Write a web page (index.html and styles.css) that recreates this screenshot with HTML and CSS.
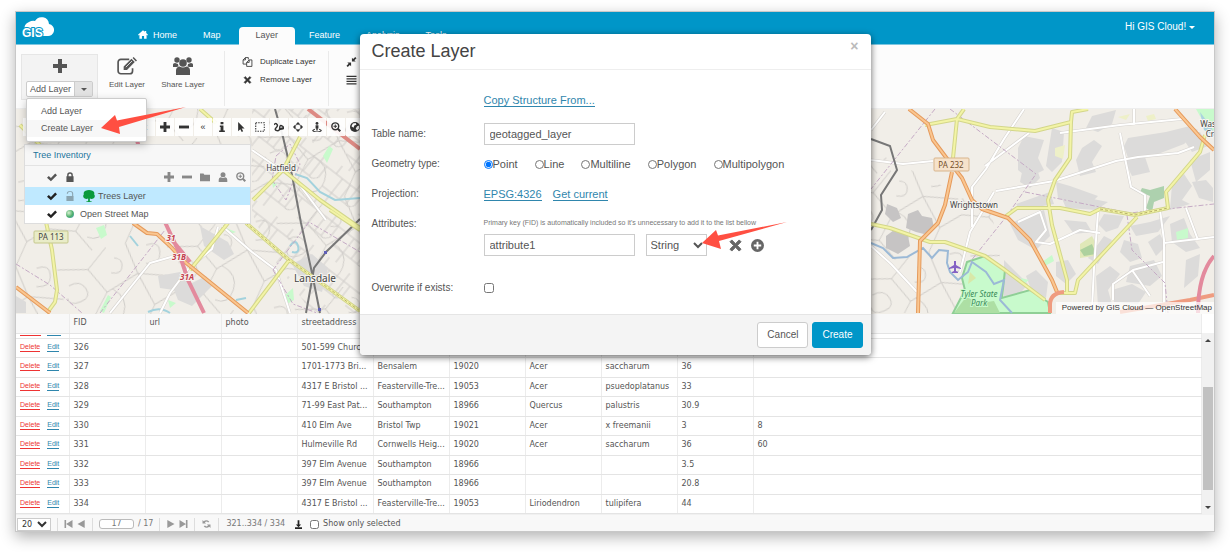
FILE: index.html
```html
<!DOCTYPE html>
<html lang="en">
<head>
    <meta charset="UTF-8">
    <meta name="viewport" content="width=device-width, initial-scale=1.0">
    <title>GIS Cloud Map Editor</title>
    <link rel="stylesheet" href="styles.css">
</head>
<body>
    <!-- shared icons -->
    <svg class="sprite" width="0" height="0" aria-hidden="true">
        <symbol id="i-plus" viewBox="0 0 14 14"><path d="M5 0h4v5h5v4H9v5H5V9H0V5h5z"/></symbol>
        <symbol id="i-minus" viewBox="0 0 14 14"><path d="M0 5h14v4H0z"/></symbol>
        <symbol id="i-times" viewBox="0 0 14 14"><path d="M3 1l4 4 4-4 2 2-4 4 4 4-2 2-4-4-4 4-2-2 4-4-4-4z" stroke="currentColor"/></symbol>
        <symbol id="i-check" viewBox="0 0 14 14"><path d="M0 8l2.500-2.500 3 3L11.500 2 14 4.500 5.500 13z"/></symbol>
        <symbol id="i-lock" viewBox="0 0 14 14"><path d="M2 6h1V4.500a4 4 0 0 1 8 0V6h1v8H2zM5 6h4V4.500a2 2 0 0 0-4 0z" fill-rule="evenodd"/></symbol>
        <symbol id="i-unlock" viewBox="0 0 14 14"><path d="M2 7h8V4a3 3 0 0 0-6 0h-1.500a4.500 4 0 0 1 9 0v3h.5v7H2z" fill-rule="evenodd"/></symbol>
        <symbol id="i-folder" viewBox="0 0 14 14"><path d="M0 2h5l1 2h8v9H0z"/></symbol>
        <symbol id="i-user" viewBox="0 0 14 14"><circle cx="7" cy="4" r="3.500"/><path d="M1 14v-3q0-3 3-3.500 3 2 6 0 3 .5 3 3.500v3z"/></symbol>
        <symbol id="i-zoom" viewBox="0 0 14 14"><circle cx="6" cy="6" r="4.800" fill="none" stroke="currentColor" stroke-width="2"/><path d="M5.300 3.500h1.400v1.800h1.800v1.400H6.700v1.800H5.300V6.700H3.500V5.300h1.800zM8.500 10.500l2-2 3.500 3.500-2 2z"/></symbol>
    </svg>

    <div class="app">
        <header class="topbar">
            <svg class="logo" viewBox="0 0 32 26">
                <path d="M3 15a6 6 0 0 1 4-8 8.500 8.500 0 0 1 6-1A7.500 7.500 0 0 1 27 9a5.500 5.500 0 0 1-2 12H4z" fill="#fff"/>
                <text x="0" y="22" font-size="12">GIS</text>
            </svg>
            <nav class="tabs">
                <a href="#"><svg class="home" viewBox="0 0 14 12"><path d="M7 0l2.500 2.300V1h2v3L14 6.500l-1 1-1-1V12H8.500V8h-3v4H2V6.500l-1 1-1-1z"/></svg>Home</a>
                <a href="#">Map</a>
                <a href="#" class="active">Layer</a>
                <a href="#">Feature</a>
                <a href="#">Analysis</a>
                <a href="#">Tools</a>
            </nav>
            <a href="#" class="account">Hi GIS Cloud! <span class="caret"></span></a>
        </header>

        <section class="ribbon">
            <div class="add-box">
                <svg class="big-plus"><use href="#i-plus"/></svg>
                <div class="split">
                    <button type="button">Add Layer</button>
                    <button type="button" class="split-caret" aria-label="More"><span class="caret"></span></button>
                </div>
                <ul class="menu">
                    <li><a href="#">Add Layer</a></li>
                    <li class="hover"><a href="#">Create Layer</a></li>
                </ul>
            </div>
            <button type="button" class="tool edit">
                <svg viewBox="0 0 18 16"><path d="M11 2H3.500A2.500 2.500 0 0 0 1 4.500v8A2.500 2.500 0 0 0 3.500 15h8a2.500 2.500 0 0 0 2.500-2.500V10" fill="none" stroke="currentColor" stroke-width="1.500"/><path d="M6 8.500L13 1.500l3 3-7 7H6zM14 .8l1-.8 3 3-1 1z"/><path d="M8 9l5.500-5.500" stroke="#fff" stroke-width=".7"/></svg>
                Edit Layer
            </button>
            <button type="button" class="tool">
                <svg viewBox="0 0 20 18"><circle cx="10" cy="6" r="3.800"/><circle cx="4" cy="3" r="2.700"/><circle cx="16" cy="3" r="2.700"/><path d="M0 10V7.500Q0 6 2 6l3 1 .5 2.500-2 .5zM20 10V7.500Q20 6 18 6l-3 1-.5 2.500 2 .5zM3 18v-4.500Q3 10 6.500 9.500q3.500 2 7 0Q17 10 17 13.500V18z"/></svg>
                Share Layer
            </button>
            <div class="actions">
                <button type="button"><svg viewBox="0 0 12 12"><path d="M7 3V.700H3.500L.7 3.500V8.500H5M3.500.7v2.800H.7M8 3.500h3.300v7.800H5V6.500zM8 3.500v3H5" fill="none" stroke="currentColor"/></svg>Duplicate Layer</button>
                <button type="button"><svg class="small"><use href="#i-times"/></svg>Remove Layer</button>
            </div>
            <div class="actions more">
                <button type="button" aria-label="Zoom to layer"><svg viewBox="0 0 12 12"><path d="M6.500 1L8 2.500 10.500 0 12 1.500 9.500 4 11 5.500H6.500zM5.500 11L4 9.500 1.500 12 0 10.500 2.500 8 1 6.500h4.500z"/></svg></button>
                <button type="button" aria-label="Attributes"><svg viewBox="0 0 12 12"><path d="M0 1h12v1.500H0zM0 4h12v1.500H0zM0 7h12v1.500H0zM0 10h12v1.500H0z"/></svg></button>
            </div>
        </section>

        <section class="map">
            <svg class="tiles" viewBox="16 109 1198 205" preserveAspectRatio="xMinYMin slice">
                <defs>
                    <pattern id="streets" width="112" height="88" patternUnits="userSpaceOnUse" patternTransform="rotate(-12)">
                        <path d="M0 12l30 6 22-18M30 18l14 26 34-12 34 10M44 44l-18 22-26-8M26 66l12 22M78 32l-6-32M78 32l10 34-16 22M88 66l24-8M50 42q14 12 6 26t-20 6M92 6q14-2 12 10t-16 8M8 30q12-4 16 6t-8 12-12-6M58 12q8 2 6 10t-12 4" fill="none" stroke="#cfccc8"/>
                    </pattern>
                    <pattern id="blocks" width="46" height="40" patternUnits="userSpaceOnUse" patternTransform="rotate(38)">
                        <path d="M0 10h46M0 28h30M12 10v30M30 0v28M22 10v18M38 10v14q-4 6-8 4M4 0v10" fill="none" stroke="#d0cdca"/>
                    </pattern>
                </defs>
                <rect x="16" y="109" width="1198" height="205" fill="#f1eee8"/>
                <rect x="16" y="109" width="344" height="205" fill="url(#streets)"/>
                <path d="M252 109h108v204h-48l-40-56-20-44z" fill="url(#blocks)"/>
                <path d="M871 150l120 60 20 103H871z" fill="url(#streets)"/>

                <!-- built-up areas -->
                <g fill="#dcdbda">
                    <path d="M158 276l22-4 10 12 16-8 6 10-20 20-14-6-4-10-14-2zM200 226l28 16 6 12-10 6-20-14zM292 264l20-10 16 14-6 24-18-6zM16 296l10 6v11H16z"/>
                    <path d="M1018 148l6-12 20 4-6 18 6 12-16 8-10-8zM1022 172l14-6 4 12-10 10-10-6zM1052 128l12 4-2 30-10 10-6-6zM1092 116l24-6-4 14-14 8-12-4zM1056 182l14 4 28 10-10 10-30-8zM1128 138l38-6 24-6 8 4-14 14-26 10-30 4-4-12zM1124 160l20-6 6 18-18 4zM1082 148l12-8 8 6-10 16 4 10-16 4-4-16z"/>
                    <path d="M1016 204l34-12 4 12-34 6zM1022 218l22-8 6 26-14 14-18-10-8-16zM1060 194l28 4 20 4-12 8-30-2zM1172 184l12-10 8 12-10 14 8 4-20 6zM1190 160l20-8v18l-14 12zM1192 182l14-2 7 8v14l-14-4z"/>
                    <path d="M1064 220l22 2 6 10-18 2zM1104 214l20 2-6 12-12 4-8-8zM1130 226l20-4 20-6-12 16-22 4zM1124 240l14 4 4 14-12 4-10-10zM1148 242l12-8 6 12-10 10zM1056 262l12-2 8 14-10 10-10-8zM1026 276l10-6 12 12-2 16-14-6zM1004 260l24 24-10 12-14 4zM1096 276l14-10 10 8-12 16 4 14-14 2zM1130 266l24-6 8 16-12 10-24-4zM1170 224l14-6 6 16 10 14-14 4-14-10zM1186 260l14-6-2 22-14 12zM1112 290l20-6 14 8-8 12-24-2zM1180 134l20-2 8 14-16 6zM1104 236l8 4-14 24-10-6z"/>
                </g>
                <g fill="#c6c4c4"><path d="M887 204l10 4 4 10-8 4-8-8zM908 214l10-4 4 6 10 2 2 10-10 6-8-2-10-4zM886 236l8-6 14 6 2 10-12 8-12-6z"/></g>

                <!-- parks and woods -->
                <path d="M967 262l18-6 20 14-3 28 28-8 18 12 2 11H953l12-23-3-12z" fill="#c8facc" stroke="#8fcf96" stroke-width="2"/>
                <path d="M954 313l12-16 14 6 14-2 6 12z" fill="#addfa4"/>
                <path d="M970 272l6 6-8 6z" fill="#d8e8a8"/>
                <g fill="#c8facc"><path d="M96 228l8-3 3 10-6 4zM284 296l9-8 1 12-7 4zM168 300l8 3-6 5zM100 311l8-16 3 2-7 16zM323 156l6-10 4 3-6 14zM226 228l10 4-6 2zM272 182l5 2-4 4zM1042 262l10-7 2 6-9 5zM1021 278l8 2-6 5zM1176 232l12-4v10l-11 2zM1196 109h18v22q-10-6-18-22z"/></g>
                <path d="M1142 188l8 2 14-4v12l-10 4-2 10-6-4 4-12-10-4z" fill="#add1ae"/>
                <path d="M1080 244l12-8 4 8-2 12-14 2z" fill="#e0e8b8"/>
                <path d="M1080 250l12-6 4 10-12 2z" fill="#add19e"/>
                <path d="M1055 148l10-3-2 14-8-3zM1118 117l12-3-4 6zM1146 116l8-2 2 5-8 2z" fill="#eef0c8"/>

                <!-- water -->
                <g fill="none" stroke="#a3d2dd" stroke-width="2">
                    <path d="M295 174l12 4 13 14 15 8 25-2M290 246q6-8 8 0t-6 6M130 236l8 10M148 312q12-6 22 1M236 300l10-2"/>
                    <path d="M871 243l12 5 10 10 14-1 16-9 9 10 7-8 9 1-1 12 3 9 8 8 10-8 4-10 14 10 8 12 10-4-4 20 12 13" stroke="#9bb9d6"/>
                </g>
                <path d="M1200 112l12 16 2 8-10-6z" fill="#aad3df"/>

                <!-- white local roads -->
                <g fill="none" stroke="#d5d2ce" stroke-width="3">
                    <path id="w1" d="M871 130l14-18M871 160l32 4 30-3M1024 109l-20 30-18 30-14 18v40M1029 133l-44 33M994 192l-24 40-10 40M996 191l58-10 62-20 22-4 40-4 16-6M1060 133l60-8 62-6M1120 133l6 30 5 24 14 8v20M1134 109v16M1098 212l-4 56-2 40M1018 222l22-10 6 18-10 12 14 2 30-14 20 3M1160 210l4 30v73M1113 300v-16l20-14 30-8M1186 208l12 32M1164 243l50-6M1150 296l-18-26M222 226l30 26 24 18 14 43M160 313l10-20 18-24 24-20 6-22M110 313l40-50 28-8M252 150l44 30 30 40M871 246l20 18 26 28"/>
                </g>
                <use href="#w1" class="road-top"/>

                <!-- boundaries -->
                <g fill="none" stroke="#c5aac5" stroke-width="1" stroke-dasharray="5 2 2 2">
                    <path d="M935 109l-64 80M950 109l86 65-30 43-36 45M1025 192l105 21 84-9M1127 215l5 35 33 33 3 30M16 264l34 21 32 28M100 313l65-83M273 270l36-48 51 30M273 270l20 34 24 9M276 156l14-12 10 20-14 36-14-20zM34 109l30 26"/>
                </g>

                <!-- railways -->
                <g fill="none" stroke="#777" stroke-width="2">
                    <path d="M275 109l8 28 9 38 9 48 11 50 8 40M360 219l-34 33-12 16-2 12-6 33"/>
                    <path d="M871 139l19 7 7 24-16 25 1 15-11 20"/>
                </g>
                <g fill="#6060b8"><rect x="352" y="224" width="3" height="3"/><rect x="324" y="251" width="3" height="3"/><rect x="318" y="308" width="3" height="3"/></g>

                <!-- yellow secondary roads -->
                <g fill="none" stroke="#d3d68a" stroke-width="4" stroke-linejoin="round">
                    <path id="y1" d="M46 222l6 28 5 40-2 12-8 11M228 223l-38 47M246 223l42 36 72 52M290 259l-41 54M330 210l30 20M300 137l-17 33-30 30M283 170l37 30 40 28M20 125l20 20M200 109l16 14M964 109l-7 10-32 6M957 119l-4 39M957 119l33 8 45 4 36-9 1-10 16-3M1071 122l-1 36-15 22-7 20 4 25 15 55v12M1006 216l11-8h43l30 6 10-5 35 6 33-7-2-16 34-40 5-17M1137 217l-59 63-3 13h-18M871 224l19 4 40 14h15l40 14 20 14 40 30"/>
                </g>
                <use href="#y1" class="road-top yellow-top"/>
                <path d="M246 223l42 36 72 52M1100 209l35 6 33-7" fill="none" stroke="#b9b26a" stroke-width="1" stroke-dasharray="3 2"/>

                <!-- orange primary roads -->
                <g fill="none" stroke="#e59a5c" stroke-width="4" stroke-linejoin="round">
                    <path id="o1" d="M16 287l34 26M133 223l14 10 10 1 13 12 15 16 63 51M909 109l19 15 5 16 15 20 14 18 10 22 10 9 26 9 22 22 22 40 5 12M952 172l-7 33-7 18-18 18-2 72M1175 109l25 28 14 13"/>
                </g>
                <use href="#o1" class="road-top orange-top"/>
                <path d="M1050 313v-8q0-12 14-13M1120 312l70-12 24-5" fill="none" stroke="#ef9c80" stroke-width="4"/>

                <!-- motorways -->
                <path d="M136 136l10 40 18 44 14 30 10 30 16 33M172 240l10 12 8 10M1214 256q-16 18-16 57" fill="none" stroke="#e38a9d" stroke-width="4"/>
                <path d="M308 109l52 40" fill="none" stroke="#dd8a83" stroke-width="4"/>

                <rect class="shield-y" x="34" y="231" width="34" height="12" rx="1"/>
                <rect class="shield-o" x="934" y="158" width="35" height="13" rx="1"/>
                <path d="M954 261h2v4l5 3v1l-5-1v3l2 1v1h-6v-1l2-1v-3l-5 1v-1l5-3z" fill="#8461c4"/>
                <g class="labels" text-anchor="middle">
                    <text x="51" y="240" class="sm bare">PA 113</text>
                    <text x="951" y="168" class="sm bare brown">PA 232</text>
                    <text x="281" y="171" class="sm">Hatfield</text>
                    <text x="315" y="282">Lansdale</text>
                    <text x="974" y="208" class="sm">Wrightstown</text>
                    <text x="171" y="241" class="exit">31</text>
                    <text x="179" y="260" class="exit">31B</text>
                    <text x="187" y="280" class="exit">31A</text>
                    <text x="979" y="297" class="park">Tyler State</text>
                    <text x="979" y="306" class="park">Park</text>
                    <text x="1208" y="127" class="sm">Was</text>
                    <text x="1210" y="137" class="sm">Cr</text>
                </g>
            </svg>

            <div class="map-tools">
                <span class="map-search">t</span>
                <button type="button" aria-label="Zoom in"><svg><use href="#i-plus"/></svg></button>
                <button type="button" aria-label="Zoom out"><svg><use href="#i-minus"/></svg></button>
                <button type="button">«</button>
                <button type="button" aria-label="Info"><svg viewBox="0 0 14 14"><path d="M5 0h4v3H5zM4 5h5v7h2v2H3v-2h2V7H4z"/></svg></button>
                <button type="button" aria-label="Select"><svg viewBox="0 0 14 14"><path d="M3 0l9 9H8l2 4-2 1-2-4-3 3z"/></svg></button>
                <button type="button" aria-label="Area select"><svg viewBox="0 0 14 14"><path d="M1 1h12v12H1z" fill="none" stroke="currentColor" stroke-width="1.500" stroke-dasharray="2 1.500"/></svg></button>
                <button type="button" aria-label="Measure"><svg viewBox="0 0 14 14"><path d="M0 4q2-3 4-1t-1 5 1 4 4-4 4-2-1 4-3 0 5-2" fill="none" stroke="currentColor" stroke-width="2"/></svg></button>
                <button type="button" aria-label="Center"><svg viewBox="0 0 14 14"><circle cx="7" cy="7" r="4" fill="none" stroke="currentColor"/><path d="M7 0l3 3H4zM7 14l3-3H4zM0 7l3-3v6zM14 7l-3-3v6z"/></svg></button>
                <button type="button" aria-label="Street view"><svg viewBox="0 0 14 14"><circle cx="7" cy="2" r="2"/><path d="M5 4.500h4V9H8v3H6V9H5z"/><path d="M4 10q-3 1-3 2 2 2 6 2t6-2q0-1-3-2" fill="none" stroke="currentColor" stroke-width="1.500"/></svg></button>
                <button type="button" aria-label="Zoom area"><svg><use href="#i-zoom"/></svg></button>
                <button type="button" aria-label="World"><svg viewBox="0 0 14 14"><circle cx="7" cy="7" r="7"/><path d="M4 2l4-.5L9 4 6 5 5 8 2 6zM10 6l3-1v4l-3 3-2-3z" fill="#fff"/></svg></button>
            </div>

            <aside class="layers">
                <h2>Tree Inventory</h2>
                <div class="layer-tools">
                    <svg class="dark"><use href="#i-check"/></svg>
                    <svg class="dark"><use href="#i-lock"/></svg>
                    <span class="spacer"></span>
                    <svg><use href="#i-plus"/></svg>
                    <svg><use href="#i-minus"/></svg>
                    <svg><use href="#i-folder"/></svg>
                    <svg><use href="#i-user"/></svg>
                    <svg><use href="#i-zoom"/></svg>
                </div>
                <div class="layer selected">
                    <svg><use href="#i-check"/></svg>
                    <svg class="faded"><use href="#i-unlock"/></svg>
                    <svg class="tree" viewBox="0 0 14 14"><path d="M3 1q4-2 8 0 3 1 2 4 2 3-1 5-2 1-4 0v3h2v1H4v-1h2v-3q-2 1-4 0-3-2-1-5-1-3 2-4z"/></svg>
                    Trees Layer
                </div>
                <div class="layer">
                    <svg><use href="#i-check"/></svg>
                    <span class="globe"></span>
                    Open Street Map
                </div>
            </aside>

            <div class="attribution">Powered by GIS Cloud — OpenStreetMap</div>
        </section>

        <section class="records">
            <div class="records-main">
                <table>
                    <colgroup>
                        <col class="c-links"><col class="c"><col class="c"><col class="c"><col class="c"><col class="c"><col class="c"><col class="c"><col class="c"><col class="c"><col>
                    </colgroup>
                    <thead>
                        <tr><th></th><th>FID</th><th>url</th><th>photo</th><th>streetaddress</th><th></th><th></th><th></th><th></th><th></th><th></th></tr>
                    </thead>
                    <tbody>
                        <tr class="partial"><td><i class="red"></i><i></i></td><td></td><td></td><td></td><td></td><td></td><td></td><td></td><td></td><td></td><td></td></tr>
                        <tr><td><a href="#" class="del">Delete</a><a href="#">Edit</a></td><td>326</td><td></td><td></td><td>501-599 Church</td><td></td><td></td><td></td><td></td><td></td><td></td></tr>
                        <tr><td><a href="#" class="del">Delete</a><a href="#">Edit</a></td><td>327</td><td></td><td></td><td>1701-1773 Bri...</td><td>Bensalem</td><td>19020</td><td>Acer</td><td>saccharum</td><td>36</td><td></td></tr>
                        <tr><td><a href="#" class="del">Delete</a><a href="#">Edit</a></td><td>328</td><td></td><td></td><td>4317 E Bristol ...</td><td>Feasterville-Tre...</td><td>19053</td><td>Acer</td><td>psuedoplatanus</td><td>33</td><td></td></tr>
                        <tr><td><a href="#" class="del">Delete</a><a href="#">Edit</a></td><td>329</td><td></td><td></td><td>71-99 East Pat...</td><td>Southampton</td><td>18966</td><td>Quercus</td><td>palustris</td><td>30.9</td><td></td></tr>
                        <tr><td><a href="#" class="del">Delete</a><a href="#">Edit</a></td><td>330</td><td></td><td></td><td>410 Elm Ave</td><td>Bristol Twp</td><td>19021</td><td>Acer</td><td>x freemanii</td><td>3</td><td>8</td></tr>
                        <tr><td><a href="#" class="del">Delete</a><a href="#">Edit</a></td><td>331</td><td></td><td></td><td>Hulmeville Rd</td><td>Cornwells Heig...</td><td>19020</td><td>Acer</td><td>saccharum</td><td>36</td><td>60</td></tr>
                        <tr><td><a href="#" class="del">Delete</a><a href="#">Edit</a></td><td>332</td><td></td><td></td><td>397 Elm Avenue</td><td>Southampton</td><td>18966</td><td></td><td></td><td>3.5</td><td></td></tr>
                        <tr><td><a href="#" class="del">Delete</a><a href="#">Edit</a></td><td>333</td><td></td><td></td><td>397 Elm Avenue</td><td>Southampton</td><td>18966</td><td></td><td></td><td>20.8</td><td></td></tr>
                        <tr><td><a href="#" class="del">Delete</a><a href="#">Edit</a></td><td>334</td><td></td><td></td><td>4317 E Bristol ...</td><td>Feasterville-Tre...</td><td>19053</td><td>Liriodendron</td><td>tulipifera</td><td>44</td><td></td></tr>
                    </tbody>
                </table>
            </div>
            <div class="scrollbar">
                <span class="arrow up"></span>
                <span class="thumb"></span>
                <span class="arrow down"></span>
            </div>
        </section>

        <footer class="pager">
            <div class="cell size"><select aria-label="Rows per page"><option>20</option></select></div>
            <div class="cell">
                <svg viewBox="0 0 10 10"><path d="M0 0h2v10H0zM10 0v10L2 5z"/></svg>
                <svg viewBox="0 0 10 10"><path d="M9 0v10L0 5z"/></svg>
            </div>
            <div class="cell page"><input type="text" value="17" aria-label="Page"> / 17</div>
            <div class="cell">
                <svg viewBox="0 0 10 10"><path d="M1 0v10l9-5z"/></svg>
                <svg viewBox="0 0 10 10"><path d="M0 0v10l8-5zM8 0h2v10H8z"/></svg>
            </div>
            <div class="cell refresh">
                <svg viewBox="0 0 10 10"><path d="M0 0l1.500 1.500Q5-1 8.500 2L7 3Q5 1 3 3l1.500 1.500H0zM10 10L8.500 8.500Q5 11 1.500 8L3 7q2 2 4 0L5.500 5.500H10z"/></svg>
            </div>
            <div class="cell count">321..334 / 334</div>
            <svg class="download" viewBox="0 0 8 10"><path d="M3 0h2v5h2L4 8 1 5h2zM0 8h8v2H0z"/></svg>
            <label class="only"><input type="checkbox"> Show only selected</label>
        </footer>
    </div>

    <form class="modal">
        <div class="modal-head">
            <h1>Create Layer</h1>
            <button type="button" class="close" aria-label="Close">×</button>
        </div>
        <div class="modal-body">
            <div class="row first">
                <span class="label"></span>
                <a href="#">Copy Structure From...</a>
            </div>
            <div class="row">
                <label class="label" for="table-name">Table name:</label>
                <input type="text" id="table-name" value="geotagged_layer">
            </div>
            <div class="row radios">
                <span class="label">Geometry type:</span>
                <label><input type="radio" name="geom" checked>Point</label>
                <label><input type="radio" name="geom">Line</label>
                <label><input type="radio" name="geom">Multiline</label>
                <label><input type="radio" name="geom">Polygon</label>
                <label><input type="radio" name="geom">Multipolygon</label>
            </div>
            <div class="row links">
                <span class="label">Projection:</span>
                <a href="#">EPSG:4326</a>
                <a href="#">Get current</a>
            </div>
            <div class="row attributes">
                <label class="label" for="attr-name">Attributes:</label>
                <div>
                    <p class="note">Primary key (FID) is automatically included so it's unnecessary to add it to the list bellow</p>
                    <div class="attr">
                        <input type="text" id="attr-name" value="attribute1">
                        <select aria-label="Attribute type"><option>String</option></select>
                        <button type="button" class="icon" aria-label="Remove"><svg viewBox="0 0 14 14"><use href="#i-times"/></svg></button>
                        <button type="button" class="icon add" aria-label="Add"><svg viewBox="0 0 14 14"><circle cx="7" cy="7" r="7"/><path d="M6 3h2v3h3v2H8v3H6V8H3V6h3z" fill="#fff"/></svg></button>
                    </div>
                </div>
            </div>
            <div class="row">
                <label class="label" for="overwrite">Overwrite if exists:</label>
                <input type="checkbox" id="overwrite">
            </div>
        </div>
        <div class="modal-foot">
            <button type="button">Cancel</button>
            <button type="submit" class="primary">Create</button>
        </div>
        <svg class="pointer pointer-type" viewBox="0 0 86 28"><path d="M0 21L14 8l2 5.500L85 0 17 19l2 8z"/></svg>
    </form>
    <svg class="pointer pointer-menu" viewBox="0 0 86 28"><path d="M0 21L14 8l2 5.500L85 0 18 20l1 7z"/></svg>
</body>
</html>
```
FILE: styles.css
```css
* {
    box-sizing: border-box;
    margin: 0;
    padding: 0;
}
body {
    position: relative;
    padding: 11px 15px 20px;
    background: #fff;
    color: #555;
    font-family: "Liberation Sans", Arial, sans-serif;
    font-size: 9px;
    line-height: 12px;
}
button, input, select {
    font: inherit;
    color: inherit;
}
button {
    background: none;
    border: 0;
    cursor: pointer;
}
a {
    color: #2f86ad;
    text-decoration: none;
}
svg {
    display: block;
    fill: currentColor;
    flex: none;
}
.sprite {
    position: absolute;
}
.caret {
    display: inline-block;
    border: 3px solid transparent;
    border-top-color: currentColor;
    border-bottom: 0;
    vertical-align: middle;
}
.app {
    border: 1px solid #c8c8c8;
    box-shadow: 0 5px 14px rgba(0, 0, 0, 0.3);
}

/* top bar */
.topbar {
    display: flex;
    height: 33px;
    background: #0096c8;
    border-bottom: 1px solid #7cc6e0;
    color: #fff;
}
.topbar a {
    color: #fff;
}
.logo {
    width: 32px;
    height: 26px;
    margin: 3px 0 0 6px;
}
.logo text {
    font-weight: bold;
    fill: #fff;
    stroke: #0096c8;
    stroke-width: 2px;
    paint-order: stroke;
}
.tabs {
    display: flex;
    gap: 2px;
    align-items: flex-end;
    margin: 0 auto -1px 72px;
}
.tabs a {
    display: flex;
    gap: 5px;
    align-items: center;
    height: 18px;
    padding: 0 12px 3px;
}
.tabs .active {
    margin-left: 4px;
    padding: 0 17px 3px;
    background: #fcfcfc;
    border-radius: 4px 4px 0 0;
    color: #555;
}
.home {
    width: 10px;
    height: 9px;
}
.topbar .account {
    margin: 9px 19px 0 0;
    font-size: 10px;
}

/* ribbon */
.ribbon {
    display: flex;
    height: 64px;
    padding-left: 5px;
    background: #fcfcfc;
    border-bottom: 1px solid #eee;
}
.add-box {
    position: relative;
    width: 77px;
    height: 46px;
    margin-top: 9px;
    padding: 4px;
    background: #f3f3f3;
    border: 1px solid #e6e6e6;
}
.big-plus {
    width: 14px;
    height: 14px;
    margin: 0 auto 8px;
}
.split {
    display: flex;
    height: 16px;
    border: 1px solid #ccc;
    border-radius: 2px;
    background: #fff;
}
.split button {
    flex: 1;
    white-space: nowrap;
}
.split .split-caret {
    flex: none;
    width: 18px;
    background: #e2e2e2;
    border-left: 1px solid #ccc;
    line-height: 8px;
}
.menu {
    position: absolute;
    z-index: 3;
    top: 43px;
    left: 4px;
    width: 121px;
    padding: 4px 0;
    background: #fff;
    border: 1px solid #ccc;
    border-radius: 2px;
    box-shadow: 0 3px 8px rgba(0, 0, 0, 0.25);
    list-style: none;
}
.menu a {
    display: block;
    padding: 2px 14px 3px;
    color: #555;
}
.menu .hover {
    background: #f7f7f7;
}
.tool {
    display: flex;
    flex-direction: column;
    gap: 4px;
    align-items: center;
    margin-top: 12px;
    height: 36px;
    width: 56px;
    font-size: 8px;
}
.tool svg {
    width: 20px;
    height: 18px;
}
.edit {
    margin-left: 1px;
}
.actions {
    display: flex;
    flex-direction: column;
    gap: 6px;
    height: 55px;
    margin-top: 6px;
    padding: 5px 10px 0 17px;
    border-left: 1px solid #eaeaea;
    font-size: 8px;
}
.tool + .actions {
    margin-left: 13px;
    width: 104px;
}
.actions button {
    display: flex;
    gap: 7px;
    align-items: center;
    height: 12px;
    white-space: nowrap;
    color: #333;
}
.actions svg {
    width: 11px;
    height: 10px;
}
.actions .small {
    height: 8px;
}

/* map */
.map {
    position: relative;
    height: 205px;
    overflow: hidden;
    background: #f1eee8;
}
.tiles {
    width: 100%;
    min-width: 1198px;
    height: 205px;
}
.road-top {
    fill: none;
    stroke: #fff;
    stroke-width: 2px;
    stroke-linejoin: round;
}
.yellow-top {
    stroke: #f3f4a6;
}
.orange-top {
    stroke: #fac690;
}
.shield-y {
    fill: #e9ecc8;
    stroke: #c5c88c;
}
.shield-o {
    fill: #f6e2cb;
    stroke: #d8b58c;
}
.labels {
    font-family: "Noto Sans", sans-serif;
    font-size: 10px;
    fill: #444;
    stroke: #f6f4f0;
    stroke-width: 2px;
    paint-order: stroke;
}
.labels .sm {
    font-size: 8px;
}
.labels .bare {
    stroke: none;
}
.labels .brown {
    fill: #75502a;
}
.labels .exit {
    font-size: 8px;
    font-style: italic;
    font-weight: bold;
    fill: #c33c4c;
}
.labels .park {
    font-size: 8px;
    font-style: italic;
    fill: #3a8a5a;
    stroke: #c8facc;
}
.map-tools {
    position: absolute;
    top: 9px;
    left: 7px;
    display: flex;
    gap: 1px;
}
.map-tools button, .map-search {
    display: flex;
    align-items: center;
    justify-content: center;
    width: 18px;
    height: 18px;
    background: rgba(255, 255, 255, 0.9);
    color: #333;
}
.map-tools .map-search {
    width: 132px;
    justify-content: flex-end;
    padding-right: 8px;
}
.map-tools svg {
    width: 10px;
    height: 10px;
}
.layers {
    position: absolute;
    top: 35px;
    left: 8px;
    width: 227px;
    border: 1px solid #ddd;
    background: #fff;
}
.layers h2 {
    height: 21px;
    padding: 4px 8px;
    background: #f7f7f7;
    border-bottom: 1px solid #e3e3e3;
    color: #22749c;
    font-size: 9px;
    font-weight: normal;
}
.layers svg {
    width: 10px;
    height: 10px;
}
.layer-tools {
    display: flex;
    gap: 8px;
    align-items: center;
    height: 21px;
    padding: 0 4px 0 22px;
    background: #f7f7f7;
    color: #888;
}
.layer-tools .dark {
    color: #555;
}
.spacer {
    flex: 1;
}
.layer {
    display: flex;
    gap: 8px;
    align-items: center;
    height: 18px;
    padding-left: 22px;
}
.layer svg {
    color: #222;
}
.selected {
    background: #bfe9ff;
}
.layer .faded {
    color: #8aa4b0;
}
.layer .tree {
    width: 12px;
    height: 12px;
    margin-right: -5px;
    color: #0a9a3c;
}
.globe {
    width: 8px;
    height: 8px;
    margin: 0 -2px 0 1px;
    border-radius: 50%;
    background: radial-gradient(circle at 35% 35%, #d7f0d0, #4cae6b 55%, #5c9fd0);
}
.attribution {
    position: absolute;
    right: 0;
    bottom: 0;
    padding: 0 2px 0 6px;
    background: rgba(255, 255, 255, 0.7);
    color: #333;
    font-size: 8px;
}

/* records table */
.records {
    display: flex;
    font-family: "DejaVu Sans", Verdana, sans-serif;
    font-size: 8px;
}
.records-main {
    flex: 1;
    min-width: 0;
    border-bottom: 1px solid #f0f0f0;
}
table {
    width: 100%;
    height: 200px;
    table-layout: fixed;
    border-collapse: collapse;
}
.c-links {
    width: 53px;
}
.c {
    width: 76px;
}
th, td {
    padding: 0 0 0 4px;
    border-right: 1px solid #ececec;
    border-bottom: 1px solid #e4e4e4;
    text-align: left;
    font-weight: normal;
    line-height: 10px;
    white-space: nowrap;
    overflow: hidden;
}
thead tr {
    height: 19px;
    background: #f8f8f8;
}
.partial, .partial td {
    height: 5px;
    line-height: 0;
    vertical-align: top;
}
.partial i {
    display: inline-block;
    width: 14px;
    height: 1px;
    margin-right: 6px;
    background: #2f86ad;
}
.partial .red {
    width: 21px;
    background: #e33;
}
td a {
    display: inline-block;
    height: 9px;
    border-bottom: 1px solid #2f86ad;
    font-family: "Liberation Sans", Arial, sans-serif;
    font-size: 7px;
    line-height: 8px;
    vertical-align: middle;
}
td .del {
    margin-right: 7px;
    border-color: #e33;
    color: #e33;
}
.scrollbar {
    display: flex;
    flex-direction: column;
    align-items: center;
    width: 12px;
    margin-top: 19px;
    background: #f1f1f1;
}
.arrow {
    border: 3px solid transparent;
}
.up {
    margin: 3px 0 45px;
    border-bottom-color: #444;
}
.down {
    margin: auto 0 3px;
    border-top-color: #444;
}
.thumb {
    width: 10px;
    height: 103px;
    background: #c1c1c1;
}

/* pager */
.pager {
    display: flex;
    align-items: center;
    height: 16px;
    padding-top: 2px;
    background: #f8f8f8;
    color: #777;
    font-family: "DejaVu Sans", Verdana, sans-serif;
    font-size: 8px;
    white-space: nowrap;
}
.cell {
    display: flex;
    gap: 4px;
    align-items: center;
    height: 13px;
    padding: 0 6px;
    border-right: 1px solid #ddd;
}
.cell svg {
    width: 9px;
    height: 8px;
    color: #999;
}
.pager .size {
    padding: 0 6px 0 1px;
}
.size select {
    width: 34px;
    height: 13px;
    background: #fff;
    border: 1px solid #ccc;
    color: #333;
}
.page input {
    width: 35px;
    height: 10px;
    border: 1px solid #bbb;
    border-radius: 3px;
    background: #fff;
    text-align: center;
}
.pager .refresh, .pager .count {
    padding: 0 7px;
}
.pager .count {
    border: 0;
}
.download {
    width: 7px;
    height: 9px;
    margin: 0 8px 0 3px;
    color: #222;
}
.only {
    display: flex;
    gap: 4px;
    align-items: center;
    color: #555;
}
.only input {
    width: 9px;
    height: 9px;
}

/* create layer dialog */
.modal {
    position: absolute;
    z-index: 5;
    top: 34px;
    left: 0;
    right: 0;
    width: 511px;
    margin: 0 auto;
    background: #fff;
    border-radius: 4px;
    box-shadow: 0 2px 7px rgba(0, 0, 0, 0.6);
    font-size: 10px;
}
.modal-head {
    display: flex;
    justify-content: space-between;
    height: 36px;
    padding: 6px 12px;
    border-bottom: 1px solid #eee;
}
.modal-head h1 {
    color: #444;
    font-size: 18px;
    font-weight: normal;
    line-height: 22px;
}
.close {
    height: 12px;
    color: #bbb;
    font-size: 14px;
    font-weight: bold;
}
.modal-body {
    padding: 15px 12px 11px;
}
.row {
    display: flex;
    align-items: center;
    height: 30px;
}
.first {
    margin-bottom: 4px;
}
.label {
    width: 112px;
}
.row a {
    border-bottom: 1px solid #2f86ad;
}
.row a, .row input, .row select, .radios label {
    font-size: 11px;
}
.row .label {
    font-size: 10px;
}
.links {
    gap: 11px;
}
.links .label {
    margin-right: -11px;
}
.row input[type="text"], .row select {
    width: 151px;
    height: 22px;
    padding: 0 5px;
    border: 1px solid #ccc;
    background: #fff;
}
.radios label {
    display: flex;
    align-items: center;
    margin-right: 17px;
}
.radios .label {
    margin-right: 0;
}
.radios input {
    width: 9px;
    height: 9px;
}
.row input[type="checkbox"] {
    width: 10px;
    height: 10px;
}
.attributes {
    align-items: flex-start;
    height: 64px;
}
.attributes .label {
    padding-top: 9px;
}
.note {
    padding-top: 8px;
    height: 25px;
    color: #777;
    font-size: 7px;
}
.attr {
    display: flex;
    align-items: center;
}
.row .attr select {
    width: 61px;
    margin: 0 22px 0 11px;
    padding: 0;
}
.icon {
    color: #666;
}
.icon svg {
    width: 13px;
    height: 13px;
}
.add {
    margin-left: 9px;
}
.modal-foot {
    display: flex;
    gap: 4px;
    justify-content: flex-end;
    padding: 7px 8px;
    background: #f4f4f4;
    border-top: 1px solid #e5e5e5;
    border-radius: 0 0 4px 4px;
}
.modal-foot button {
    height: 26px;
    padding: 0 9px;
    background: #fff;
    border: 1px solid #ccc;
    border-radius: 3px;
}
.modal-foot .primary {
    background: #0096c8;
    border-color: #0096c8;
    color: #fff;
}

/* red callout arrows */
.pointer {
    position: absolute;
    z-index: 6;
    width: 86px;
    height: 28px;
    color: #ff4f42;
}
.pointer-type {
    top: 188px;
    left: 342px;
}
.pointer-menu {
    top: 107px;
    left: 101px;
}
```
